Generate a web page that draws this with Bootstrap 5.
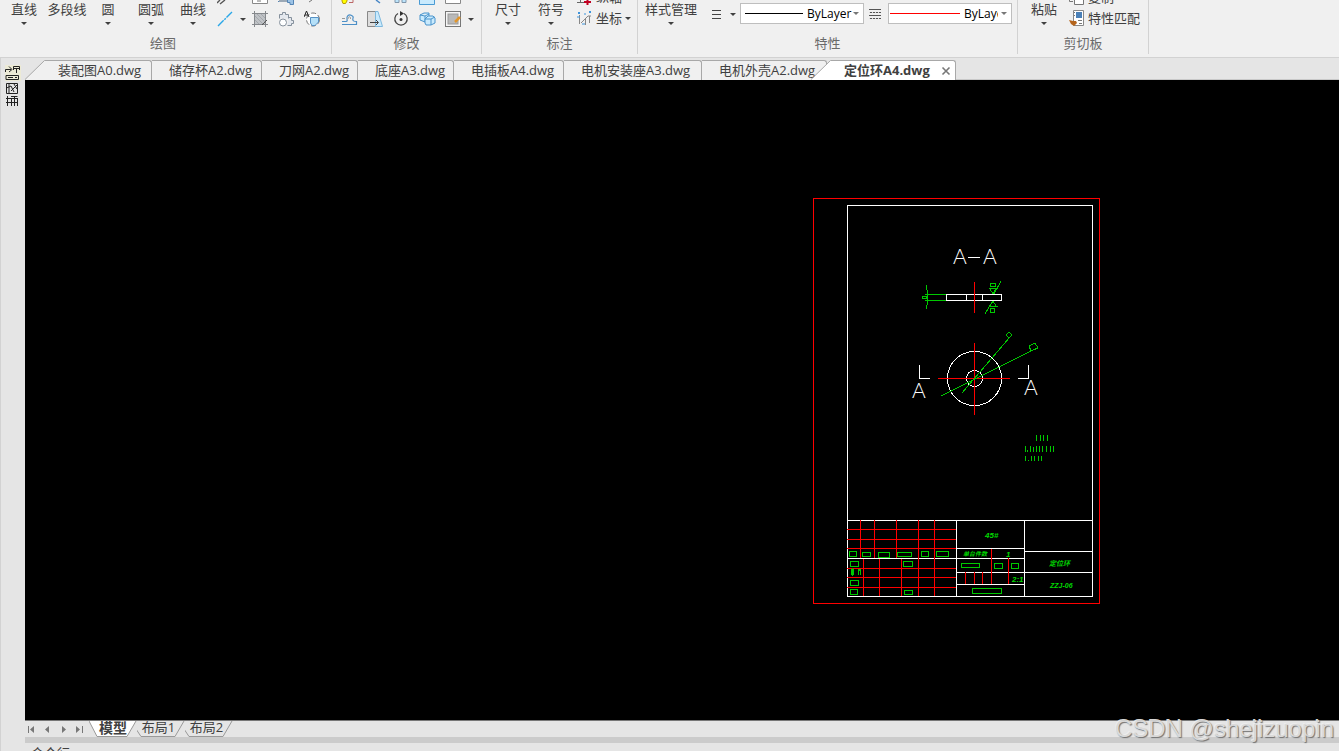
<!DOCTYPE html>
<html lang="zh-CN">
<head>
<meta charset="utf-8">
<meta name="viewport" content="width=device-width, initial-scale=1">
<title>定位环A4.dwg</title>
<link href="https://cdn.jsdelivr.net/npm/bootstrap@5.3.0/dist/css/bootstrap.min.css" rel="stylesheet">
<style>
body{font:13px/16px "Open Sans","Noto Sans CJK SC",sans-serif;color:#404040;background:#e5e5e5}
svg{display:block;flex:none}
button{border:0;background:none;padding:0;color:inherit;font:inherit;white-space:nowrap}
.ribbon{height:58px;background:#f0f0f0;border-bottom:1px solid #d2d2d2}
.rgroup{height:54px;border-right:1px solid #d2d2d2;flex:none}
.rbody{height:34px;overflow:hidden}
.rlabel{line-height:19px;color:#6a6a6a}
.big{height:25px;text-align:center;display:flex;flex-direction:column;align-items:center;justify-content:space-between;line-height:18px}
.w36{width:36px}.w38{width:38px}.w42{width:42px}.w44{width:44px}.w48{width:48px}.w62{width:62px}
.caret{width:0;height:0;border:3px solid transparent;border-top:3px solid #404040;border-bottom:0;display:block;flex:none}
.icons{display:grid;grid-template-rows:8px 22px;justify-items:center;align-items:center}
.icons>*:nth-child(-n+5){align-self:start}
.draw-icons{grid-template-columns:27px 9px 26px 26px 26px}
.edit-icons{grid-template-columns:repeat(5,26px) 9px}
.g-draw{width:332px}.g-edit{width:150px}.g-dim{width:156px}.g-prop{width:380px}.g-clip{width:131px}
.g-draw .rlabel{padding-right:5px}
.g-draw .rbody{padding-left:3px}.g-edit .rbody{padding-left:4px}.g-dim .rbody,.g-clip .rbody{padding-left:5px}.g-prop .rbody{padding-left:2px}
.cmds button{display:flex;align-items:center;gap:3px}
.cmds .cut{height:6px;overflow:hidden;align-items:flex-end}
.cmds .cut span{line-height:18px}
.cmds .whole{height:24px;line-height:24px}
.g-prop .menu-btn{margin-left:10px}
.combo{width:124px;height:21px;background:#fff;border:1px solid #bebebe;color:#000;font-size:12px;margin-top:3px}
.combo select{appearance:none;border:0;background:none;padding:0;font:inherit;color:inherit;outline:0;height:19px;width:46px}
.combo .tight{width:34px}
.combo .caret{border-top-color:#777;margin:0 4px 0 auto}
.side{width:25px;border-left:1px solid #d2d2d2;padding:7px 0 0 4px}
.doctabs{height:22px;padding-top:2px;border-bottom:1px solid #c8c8c8}
.dtab{height:20px;border-top:1px solid #a8a8a8;border-right:1px solid #a8a8a8;border-radius:0 3px 0 0;background:#f0f0f0;padding-left:17px;text-align:left;line-height:17px;flex:none}
.t96{width:96px}.t110{width:110px}.t138{width:138px}.t125{width:125px}
.first{width:107px;padding-left:13px}
.act{background:#fff;width:125px;padding-left:13px;font-weight:700}
.act-slope{margin-left:-16px}
.stage{background:#000;overflow:hidden}
.sheet{position:absolute;right:239px;top:118px}
.mid{min-height:0}
.laytabs{height:17px;border-top:1px solid #777}
.gutter{height:6px;background:#cbcbcb}
.cmdline{height:8px;overflow:hidden}
.cmdline label{margin-left:6px;margin-top:2px;display:block}
.navs{width:64px}
.ltab{width:48px;height:16px;padding:0 5px 3px 0;line-height:13px;position:relative;text-align:center}
.ltab svg{position:absolute;left:0;top:0}
.ltab span{position:relative}
.ltab.active{font-size:14px;padding-right:0}
.watermark{position:absolute;right:5px;bottom:8px;font:24px/28px "Liberation Sans",sans-serif;color:#d8d8d8;opacity:.9;text-shadow:1px 1px 1px #666,-1px -1px 0 #eee}
.ln{fill:none;stroke:#fff}.rd{fill:none;stroke:#f00}.gr{fill:none;stroke:#00c800}
.tA{font:300 21px Lato,sans-serif;fill:#fff}
.tg{font:italic 700 8px "Liberation Sans Narrow","Liberation Sans","Noto Sans CJK SC",sans-serif;fill:#00d800}
.tg-s{font-size:6px}
.tg-m{font-size:7px}
</style>
</head>
<body class="vh-100 overflow-hidden d-flex flex-column position-relative">
<header class="ribbon d-flex flex-shrink-0">
  <section class="rgroup g-draw">
    <div class="rbody d-flex">
      <button class="big w42">直线<i class="caret"></i></button>
      <button class="big w44">多段线</button>
      <button class="big w38">圆<i class="caret"></i></button>
      <button class="big w48">圆弧<i class="caret"></i></button>
      <button class="big w36">曲线<i class="caret"></i></button>
      <div class="icons draw-icons">
        <button aria-label="双线"><svg width="16" height="6"><path d="M0 3L3 0M3 4L8 0" stroke="#555" stroke-width="1.400"/></svg></button>
        <span></span>
        <button aria-label="矩形"><svg width="16" height="6"><path d="M.5 0V3.500H15.500V0" fill="#fff" stroke="#888"/><path d="M5 1h4" stroke="#777"/></svg></button>
        <button aria-label="块"><svg width="16" height="6"><path d="M0 1.500H8M9.500 0V2.500H12V4.500H15.500V0" fill="#9cc3e6" stroke="#5484b4"/><path d="M1 0H9V2H1Z" fill="#9aa8b6"/></svg></button>
        <button aria-label="样条"><svg width="16" height="6"><path d="M5 2L8 0" stroke="#777"/></svg></button>
        <button aria-label="构造线"><svg width="16" height="16"><path d="M1 15L15 1" stroke="#2aa7e8" stroke-width="1.400" stroke-dasharray="8 1 2 1"/></svg></button>
        <button aria-label="更多"><i class="caret"></i></button>
        <button aria-label="填充"><svg width="16" height="16"><rect x="2" y="2" width="12" height="12" fill="#bfc2c6"/><path d="M2.500 0V16M13.500 0V16M0 2.500H16M0 13.500H16" stroke="#85888c"/><path d="M3 5L11 13M3 9L7 13M5 3L13 11M9 3L13 7" stroke="#a3a7ab"/><path d="M10 14L15 9" stroke="#555"/></svg></button>
        <button aria-label="轮廓"><svg width="17" height="17" fill="#e4e8ee" stroke="#85909c"><path d="M1.500 7.500V3.500H4.500V1.500H7.500V3.500H10.500V7.500M10.500 6.500H13.500V9.500H15.500V12.500H13.500V14.500H9.500"/><circle cx="5" cy="11.500" r="3.500" fill="#fff"/></svg></button>
        <button aria-label="文字填充"><svg width="17" height="17"><circle cx="9" cy="8.500" r="6.500" fill="#fff" stroke="#777" stroke-dasharray="5 2"/><path d="M6.500 6.500H14.500V11L11 14.500H8L6.500 12Z" fill="#b5e0f8" stroke="#5791c4"/><path d="M0 6L2.500 0 5 6M1 4H4" fill="none" stroke="#222"/></svg></button>
      </div>
    </div>
    <div class="rlabel text-center">绘图</div>
  </section>
  <section class="rgroup g-edit">
    <div class="rbody d-flex">
      <div class="icons edit-icons">
        <button aria-label="复制对象"><svg width="16" height="6"><path d="M6 0V1L4.500 3.500H2L1 1V0" fill="#ff0" stroke="#b99b00"/><path d="M8 2.500H12V0" fill="none" stroke="#b66"/></svg></button>
        <button aria-label="移动"><svg width="16" height="6"><path d="M9 0L13 3" stroke="#4686c6" stroke-width="1.500"/></svg></button>
        <button aria-label="镜像"><svg width="16" height="6"><path d="M2 0V2.500H6V0M9 0V2.500H13V0" fill="#bce4fb" stroke="#8097ac"/></svg></button>
        <button aria-label="拉伸"><svg width="16" height="6"><path d="M.5 0V4.500H15.500V0" fill="#c9eafd" stroke="#4a9bd4"/></svg></button>
        <button aria-label="分解"><svg width="16" height="6"><path d="M.5 0V3.500H15.500V0" fill="#fff" stroke="#888"/></svg></button>
        <span></span>
        <button aria-label="偏移"><svg width="17" height="17" fill="none"><path d="M1 10.500H5C8 10 4 7 7 4.500C9 3 13 5 12 7C11 10 13 10.500 15.500 10.500V13.500H1" stroke="#4c8fc7" stroke-width="1.200"/><path d="M1 7.500H4M7 8C7 5 10 5 9.500 8" stroke="#999"/></svg></button>
        <button aria-label="倾斜"><svg width="16" height="16"><path d="M.5 .5H9.500V15.500H.5Z" fill="#ddd" stroke="#888"/><path d="M8.500 .5H11L15.500 15.500H8.500Z" fill="#c9eafd" stroke="#7eb8dd"/><path d="M3 11.500H11M9 9L11.500 11.500 9 14" fill="none" stroke="#444"/></svg></button>
        <button aria-label="旋转"><svg width="16" height="16"><path d="M5 2.500A6.200 6.200 0 1 0 11 2.500" fill="none" stroke="#444" stroke-width="1.300"/><path d="M7 0L11 2.500 7 5Z" fill="#333"/><circle cx="8" cy="8.500" r="1.500" fill="#333"/></svg></button>
        <button aria-label="阵列"><svg width="17" height="17" fill="#c9eafd" stroke="#4a94cc"><path d="M1 4L5 2H10V9L6 11 1 9ZM1 4L6 5 10 3M6 5V11"/><path d="M6 8L9 5H14L16 7V12L12 14H7L6 12ZM6 8H12V14M12 8L16 6"/></svg></button>
        <button aria-label="编辑填充"><svg width="16" height="16"><rect x=".5" y=".5" width="15" height="15" fill="#f5f5f5" stroke="#777"/><rect x="3" y="3" width="10" height="10" fill="#b9b9b9" stroke="#999"/><path d="M10 11L15 6" stroke="#e2962b" stroke-width="2.500"/></svg></button>
        <button aria-label="更多"><i class="caret"></i></button>
      </div>
    </div>
    <div class="rlabel text-center">修改</div>
  </section>
  <section class="rgroup g-dim">
    <div class="rbody d-flex">
      <button class="big w42">尺寸<i class="caret"></i></button>
      <button class="big w44">符号<i class="caret"></i></button>
      <div class="cmds ms-1">
        <button class="cut"><svg width="16" height="6"><path d="M0 2.500H12M3.500 0V3" stroke="#666"/><path d="M7 2H14M10.500 0V5" stroke="#c00020" stroke-width="2"/></svg><span>纵轴</span></button>
        <button class="whole"><svg width="16" height="16" fill="none"><path d="M2.500 5V14M4 13L8 9L11 6H14M8.500 8V15M12.500 6V13" stroke="#888"/><path d="M1 2L3 4M3 2L1 4M12 1L14 3M14 1L12 3M0 7H3M5 14H8M8 3V5" stroke="#3d94dc"/></svg>坐标<i class="caret"></i></button>
      </div>
    </div>
    <div class="rlabel text-center">标注</div>
  </section>
  <section class="rgroup g-prop">
    <div class="rbody d-flex">
      <button class="big w62">样式管理<i class="caret"></i></button>
      <div class="d-flex align-items-center align-self-start">
        <button class="menu-btn d-flex align-items-center mt-1" aria-label="线型列表"><svg width="10" height="12"><path d="M0 2.500H9M0 6.500H9M0 10.500H9" stroke="#444"/></svg></button>
        <i class="caret mt-1 ms-2 me-1"></i>
        <label class="combo d-flex align-items-center"><svg width="62" height="3"><path d="M4 1.500H62" stroke="#000"/></svg><select class="ms-1" aria-label="线型"><option>ByLayer</option></select><i class="caret"></i></label>
        <svg class="mt-1 mx-1" width="16" height="12"><path d="M1 1.500H13M1 4.500H13M1 7.500H13M1 10.500H13" stroke="#555"/><path d="M1 4.500H13M1 10.500H13" stroke="#ddd" stroke-dasharray="1 2"/></svg>
        <label class="combo d-flex align-items-center"><svg width="71" height="3"><path d="M1 1.500H71" stroke="#f00"/></svg><select class="tight ms-1" aria-label="颜色"><option>ByLayer</option></select><i class="caret"></i></label>
      </div>
    </div>
    <div class="rlabel text-center">特性</div>
  </section>
  <section class="rgroup g-clip">
    <div class="rbody d-flex">
      <button class="big w42">粘贴<i class="caret"></i></button>
      <div class="cmds ms-1">
        <button class="cut"><svg width="16" height="6"><path d="M.5 0V1.500H4M5.500 0V4.500H14.500V0" fill="#fff" stroke="#777"/></svg><span>复制</span></button>
        <button class="whole"><svg width="16" height="16"><path d="M4.500 .5H14.500V15.500H4.500Z" fill="#fff" stroke="#888"/><rect x="7" y="2" width="6" height="6" fill="#4a80b8"/><path d="M5 2.500H6M5 5.500H6M9 10.500H13M10 13.500H13" stroke="#777"/><path d="M0 10L4 11 7 11 8 13 5 16 2 14Z" fill="#b5651d"/></svg>特性匹配</button>
      </div>
    </div>
    <div class="rlabel text-center">剪切板</div>
  </section>
</header>
<div class="d-flex flex-grow-1 mid">
  <aside class="side flex-shrink-0">
    <button aria-label="图册"><svg width="16" height="44" fill="none" stroke="#222"><path d="M0 0H16V16H0Z" fill="#ecead6" stroke="none"/><path d="M.5 7V4.500H6M4 1.500L7 4.500 4 7M8.500 5V1.500H14.500V5M8.500 3.500H14.500M11.500 3V8M1 10.500H13.500V14.500H1ZM3 12.500H8M10 12.500H12"/><path d="M1.500 18.500H12.500V28.500H1.500ZM4 19V28M1.500 23L6 21 9 27M6 26L12 20M9 19L12 24"/><path d="M1 33.500H13M2.500 31V41M6 31.500H12.500M6.500 33V41M9.500 31V41M1 37.500H13M12.500 33V41"/></svg></button>
  </aside>
  <div class="d-flex flex-column flex-grow-1">
    <nav class="doctabs d-flex">
      <svg width="20" height="20"><path d="M0 20L20 0V20Z" fill="#f0f0f0"/><path d="M0 19.500L19.500 .5H20" stroke="#a8a8a8" fill="none"/></svg>
      <button class="dtab first">装配图A0.dwg</button>
      <button class="dtab t110">储存杯A2.dwg</button>
      <button class="dtab t96">刀网A2.dwg</button>
      <button class="dtab t96">底座A3.dwg</button>
      <button class="dtab t110">电插板A4.dwg</button>
      <button class="dtab t138">电机安装座A3.dwg</button>
      <button class="dtab t125">电机外壳A2.dwg</button>
      <svg class="act-slope" width="20" height="20"><path d="M0 20L20 0V20Z" fill="#fff"/><path d="M0 19.500L19.500 .5H20" stroke="#a8a8a8" fill="none"/></svg>
      <button class="dtab act d-flex align-items-center">定位环A4.dwg<svg class="ms-auto me-1" width="10" height="10"><path d="M1.500 1.500L8.500 8.500M8.500 1.500L1.500 8.500" stroke="#777" stroke-width="1.600"/></svg></button>
    </nav>
    <main class="stage flex-grow-1 position-relative">
      <svg class="sheet" width="287" height="406" viewBox="813 198 287 406" shape-rendering="crispEdges">
        <path class="rd" d="M813.500 198.500H1099.500V603.500H813.500Z"/>
        <path class="ln" d="M847.500 205.500H1092.500V596.500H847.500ZM847 520.500H1092"/>
        <text class="tA" x="953" y="264">A</text><path class="ln" d="M968 257.500H980"/><text class="tA" x="983" y="264">A</text>
        <path class="gr" d="M926.500 285L927.500 294V301L926.500 309M925 294.500H946M925 300.500H946M922.500 296.500H926.500V298.500H922.500Z"/>
        <path class="ln" d="M946.500 294.500H1001.500V300.500H946.500ZM966.500 294V300M982.500 294V300"/>
        <path class="rd" d="M974.500 282V313"/>
        <path class="gr" d="M990.500 283.500H995.500V286.500H990.500ZM989 288.500H998M990 289L993 294 996 289M994 294L1001 281M990 306H998M990 306L993 301 996 306M990.500 308.500H994.500V312.500H990.500ZM992 302L985 314"/>
        <g class="ln"><circle cx="974.500" cy="378.500" r="27"/><circle cx="974.500" cy="378.500" r="8"/><path d="M919.500 365V378.500H930M1028.500 365V378.500H1018"/></g>
        <path class="rd" d="M938 378.500H1010M974.500 343V415"/>
        <path class="gr" d="M962 393L1010 337M941 396L1037 348M1006 335L1009 332 1012 335 1009 338ZM1029 346L1035 343 1038 348 1031 351Z"/>
        <text class="tA" x="912" y="398">A</text><text class="tA" x="1024" y="395">A</text>
        <path class="gr" d="M1036.500 435V441M1040.500 435V441M1043.500 435V441M1047.500 435V441M1025.500 446V452M1027.500 450V452M1030.500 446V452M1033.500 447V452M1036.500 446V452M1039.500 446V452M1042.500 446V452M1046.500 446V452M1050.500 446V452M1053.500 446V452M1025.500 456V461M1028.500 460V461M1031.500 456V461M1034.500 456V461M1038.500 456V461M1041.500 456V461"/>
        <path class="ln" d="M956.500 520V596M1024.500 520V596M847 558.500H1024M956 548.500H1024M956 572.500H1092M956 584.500H1024M1024 551.500H1092"/>
        <path class="rd" d="M847 529.500H956M847 539.500H956M847 548.500H956M847 568.500H956M847 577.500H956M847 587.500H956M860.500 520V558M874.500 520V558M896.500 520V558M918.500 520V596M934.500 520V596M863.500 559V596M879.500 559V596M901.500 559V596M965.500 572V584M974.500 572V584M982.500 572V584M991.500 549V584M1008.500 558V584"/>
        <path class="gr" d="M849.500 551.500H856.500V556.500H849.500ZM862.500 552.500H870.500V556.500H862.500ZM878.500 552.500H889.500V557.500H878.500ZM897.500 552.500H911.500V556.500H897.500ZM921.500 551.500H928.500V556.500H921.500ZM936.500 551.500H948.500V556.500H936.500ZM850.500 561.500H858.500V566.500H850.500ZM903.500 561.500H912.500V566.500H903.500ZM850.500 580.500H858.500V585.500H850.500ZM850.500 589.500H857.500V594.500H850.500ZM904.500 590.500H912.500V594.500H904.500ZM961.500 563.500H979.500V567.500H961.500ZM994.500 563.500H1002.500V568.500H994.500ZM1011.500 563.500H1018.500V568.500H1011.500ZM972.500 588.500H1001.500V593.500H972.500ZM851.500 569V575M852.500 568V576M853.500 569V575M858.500 569V575M859.500 569V571M860.500 569V575"/>
        <text class="tg" x="985" y="538">45#</text>
        <text class="tg tg-s" x="963" y="556">单台件数</text>
        <text class="tg" x="1006" y="557">1</text><text class="tg" x="1012" y="582">2:1</text>
        <text class="tg tg-m" x="1049" y="566">定位环</text><text class="tg tg-m" x="1050" y="588">ZZJ-06</text>
      </svg>
    </main>
    <footer>
      <div class="laytabs d-flex">
        <div class="navs">
          <svg width="64" height="16" fill="#777"><path d="M3 5H4V12H3ZM9 5V12L5 8.500ZM24 5V12L20 8.500ZM37 5V12L41 8.500ZM51 5V12L55 8.500ZM57 5H58V12H57Z"/></svg>
        </div>
        <button class="ltab active fw-bold"><svg width="48" height="17"><path d="M0 0L8 15.500H38L47 0Z" fill="#fff"/><path d="M0 0L8 15.500H38L47 0" fill="none" stroke="#999"/></svg><span>模型</span></button>
        <button class="ltab"><svg width="48" height="17"><path d="M-1 8L4 15.500H38L47 0" fill="none" stroke="#999"/></svg><span>布局1</span></button>
        <button class="ltab"><svg width="48" height="17"><path d="M-1 8L4 15.500H38L47 0" fill="none" stroke="#999"/></svg><span>布局2</span></button>
      </div>
      <div class="gutter"></div>
      <div class="cmdline"><label>命令行</label></div>
    </footer>
  </div>
</div>
<div class="watermark">CSDN @shejizuopin</div>
<script src="https://cdn.jsdelivr.net/npm/bootstrap@5.3.0/dist/js/bootstrap.bundle.min.js"></script>
</body>
</html>
